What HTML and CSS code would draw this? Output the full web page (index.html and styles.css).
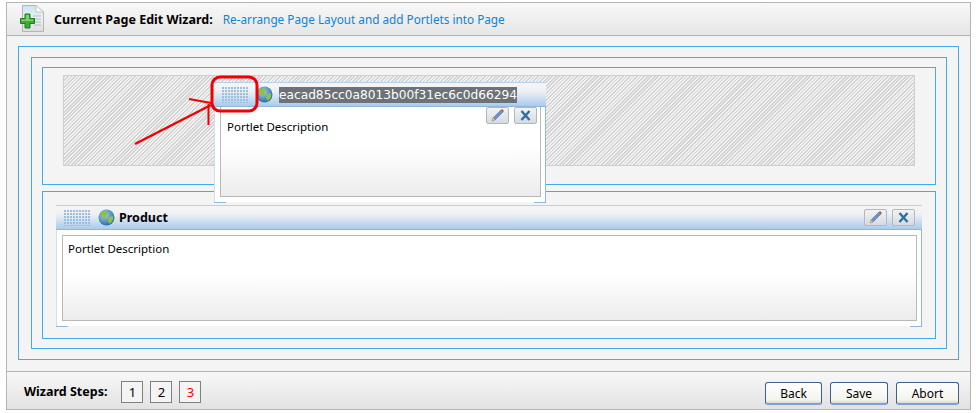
FILE: index.html
```html
<!DOCTYPE html>
<html>
<head>
    <title>Current Page Edit Wizard</title>
    <link rel="stylesheet" href="styles.css">
</head>
<body>
    <div id="wizard">
        <div class="wizard-header">
            <svg class="page-icon" width="26" height="28" viewBox="0 0 26 28">
                <defs>
                    <linearGradient id="sheet" x1="0" y1="0" x2="0" y2="1">
                        <stop offset="0" stop-color="#c9e4f4"/>
                        <stop offset="0.5" stop-color="#eef2f3"/>
                        <stop offset="1" stop-color="#dcdcdc"/>
                    </linearGradient>
                </defs>
                <path d="M2.5 .5H16L23.5 7V26.5H2.5Z" fill="url(#sheet)" stroke="#b5b5b5"/>
                <path d="M16 .5V7H23.5Z" fill="#fff" stroke="#c4c4c4"/>
                <path d="M13 11H21M14 14H21M14 17H21M14 20H21" stroke="#c3ccd0" stroke-width="1.5"/>
                <path d="M5 9H10V13.5H14.5V18.5H10V23H5V18.5H.5V13.5H5Z" fill="#3faa35" stroke="#1f7a22"/>
                <path d="M6 10H9V14.5H6ZM1.5 14.500H13V16H1.500Z" fill="#7fd36f"/>
            </svg>
            <span class="wizard-title">Current Page Edit Wizard:</span>
            <span class="wizard-sub">Re-arrange Page Layout and add Portlets into Page</span>
        </div>

        <div class="wizard-body">
            <div class="frame frame-outer">
                <div class="frame frame-mid">
                    <div class="frame frame-inner frame-top">
                        <div class="drop-zone"></div>
                    </div>
                    <div class="frame frame-inner frame-bottom">
                        <div class="portlet">
                            <div class="portlet-title">
                                <svg class="grip" width="27" height="16"><rect width="27" height="16" fill="url(#dots)"/></svg>
                                <svg class="globe" width="17" height="17" viewBox="0 0 17 17"><use href="#globe-icon"/></svg>
                                <span class="portlet-name">Product</span>
                                <div class="tools">
                                    <span class="tool"><svg width="15" height="13" viewBox="0 0 15 13"><use href="#pencil-icon"/></svg></span>
                                    <span class="tool"><svg width="15" height="13" viewBox="0 0 15 13"><use href="#close-icon"/></svg></span>
                                </div>
                            </div>
                            <div class="portlet-wrap">
                                <div class="portlet-content">Portlet Description</div>
                                <span class="corner corner-left"></span>
                                <span class="corner corner-right"></span>
                            </div>
                        </div>
                    </div>
                </div>
            </div>
        </div>

        <div class="wizard-footer">
            <span class="steps-label">Wizard Steps:</span>
            <span class="step">1</span>
            <span class="step">2</span>
            <span class="step step-current">3</span>
            <div class="buttons">
                <button type="button" class="btn btn-back">Back</button>
                <button type="button" class="btn btn-save">Save</button>
                <button type="button" class="btn btn-abort">Abort</button>
            </div>
        </div>
    </div>

    <!-- portlet being dragged, lies over the drop zone -->
    <div class="portlet portlet-float">
        <div class="portlet-title">
            <svg class="grip" width="27" height="16"><rect width="27" height="16" fill="url(#dots)"/></svg>
            <svg class="globe" width="17" height="17" viewBox="0 0 17 17"><use href="#globe-icon"/></svg>
            <span class="portlet-name selected">eacad85cc0a8013b00f31ec6c0d66294</span>
        </div>
        <div class="tools">
            <span class="tool"><svg width="15" height="13" viewBox="0 0 15 13"><use href="#pencil-icon"/></svg></span>
            <span class="tool"><svg width="15" height="13" viewBox="0 0 15 13"><use href="#close-icon"/></svg></span>
        </div>
        <div class="portlet-wrap">
            <div class="portlet-content">Portlet Description</div>
            <span class="corner corner-left"></span>
            <span class="corner corner-right"></span>
        </div>
    </div>

    <!-- red annotation -->
    <svg class="annotation" width="976" height="413" viewBox="0 0 976 413">
        <rect x="212" y="77" width="45" height="34" rx="8" fill="none" stroke="#f00000" stroke-width="3"/>
        <path d="M135 144L211 105" fill="none" stroke="#f00000" stroke-width="2.500"/>
        <path d="M189 99L211 103M208.500 104V125" fill="none" stroke="#f00000" stroke-width="2"/>
    </svg>

    <!-- shared icon defs -->
    <svg width="0" height="0" class="defs">
        <defs>
            <pattern id="dots" width="3" height="3" patternUnits="userSpaceOnUse">
                <rect width="2" height="2" fill="#9dbedd"/>
            </pattern>
            <radialGradient id="sea" cx="0.4" cy="0.35" r="0.7">
                <stop offset="0" stop-color="#a7d3ea"/>
                <stop offset="1" stop-color="#23689c"/>
            </radialGradient>
            <symbol id="globe-icon" viewBox="0 0 17 17">
                <circle cx="8.500" cy="8.500" r="8" fill="url(#sea)"/>
                <path d="M4 3L8 2 10 4 8 7 9 9 6 10 4 7 2 6ZM11 8L15 7 15 11 12 15 10 12Z" fill="#8fc04a"/>
            </symbol>
            <symbol id="pencil-icon" viewBox="0 0 15 13">
                <path d="M3 9L11 1 13 3 5 11 2 12Z" fill="#6d93d6" stroke="#50699c" stroke-width=".6"/>
                <path d="M11 1L12 0 14 2 13 3Z" fill="#b5533c"/>
                <path d="M3 9L5 11 2 12Z" fill="#f0d050"/>
            </symbol>
            <symbol id="close-icon" viewBox="0 0 15 13">
                <path d="M3.500 2L11.500 11M11.500 2L3.500 11" stroke="#2f6ea3" stroke-width="2.400"/>
            </symbol>
        </defs>
    </svg>
</body>
</html>
```

FILE: styles.css
```css
body {
    margin: 0;
    background-color: #fff;
    font-family: "Noto Sans", Tahoma, sans-serif;
    font-size: 11.5px;
    color: #000;
    height: 413px;
    overflow: hidden;
    position: relative;
}

#wizard {
    margin: 2px 5px 0 6px;
    border: 1px solid #b4b4b4;
    height: 408px;
    box-sizing: border-box;
    display: flex;
    flex-direction: column;
    background-color: #f4f4f4;
}

.wizard-header {
    height: 33px;
    flex: none;
    box-sizing: border-box;
    border-bottom: 1px solid #b4b4b4;
    background: linear-gradient(#f8f8f8, #e6e6e6);
    display: flex;
    align-items: center;
    padding-left: 13px;
}

.page-icon {
    margin-right: 8px;
}

.wizard-title {
    font-weight: bold;
    font-size: 12.500px;
    margin-right: 10px;
}

.wizard-sub {
    color: #0a84e0;
    font-size: 11.750px;
}

.wizard-body {
    padding: 10px 11px 10px;
    flex: 1;
}

.frame {
    border: 1px solid #3fabf0;
    box-sizing: border-box;
}

.frame-outer {
    padding: 10px 11px 10px 12px;
    height: 314px;
}

.frame-mid {
    padding: 9px 10px;
    height: 292px;
}

.frame-top {
    padding: 7px 20px;
    height: 118px;
    margin-bottom: 6px;
}

.frame-bottom {
    padding: 13px 13px;
    height: 148px;
}

.drop-zone {
    height: 91px;
    box-sizing: border-box;
    border: 1px solid #cfcfcf;
    background: repeating-linear-gradient(135deg, #d2d2d2 0, #d2d2d2 1.200px, #f2f2f2 1.200px, #f2f2f2 2.500px);
}

.portlet-title {
    height: 25px;
    box-sizing: border-box;
    border-top: 1px solid #b5d2ea;
    border-bottom: 1px solid #8fb5d8;
    background: linear-gradient(#f5f5f5 0, #eef1f4 35%, #a9cbee 100%);
    display: flex;
    align-items: center;
    padding-left: 8px;
}

.grip {
    margin-right: 7px;
}

.globe {
    margin-right: 4px;
}

.portlet-name {
    font-weight: bold;
    font-size: 12.500px;
}

.selected {
    font-weight: normal;
    font-family: "DejaVu Sans", sans-serif;
    font-size: 12.200px;
    color: #fff;
    background-color: #6d7278;
    line-height: 16px;
    margin-left: 2px;
}

.tools {
    margin-left: auto;
    margin-right: 7px;
    display: flex;
    gap: 5px;
}

.tool {
    width: 23px;
    height: 17px;
    box-sizing: border-box;
    border: 1px solid #b0b8c0;
    border-radius: 2px;
    background: linear-gradient(#f2f2f2, #d6dbe0);
    display: flex;
    align-items: center;
    justify-content: center;
}

.portlet-wrap {
    position: relative;
    padding: 5px 4px 5px 5px;
    border-left: 1px solid #cfe0ee;
    border-right: 1px solid #8fb9dd;
    background-color: #fff;
    height: 96px;
    box-sizing: border-box;
}

.portlet-content {
    height: 100%;
    box-sizing: border-box;
    border: 1px solid #b8b8b8;
    padding: 5px;
    background: linear-gradient(#fff 0, #fff 45%, #ececec 100%);
}

.corner {
    position: absolute;
    bottom: -1px;
    width: 12px;
    height: 1px;
    background-color: #8fb5d8;
}

.corner-left {
    left: -1px;
}

.corner-right {
    right: -1px;
}

.portlet-float {
    position: absolute;
    left: 214px;
    top: 82px;
    width: 332px;
}

.portlet-float .portlet-wrap {
    height: 95px;
    padding-top: 0;
}

.portlet-float .portlet-content {
    border-top: none;
    padding: 12px 6px;
}

.portlet-float .tools {
    position: absolute;
    top: 25px;
    right: 2px;
    z-index: 1;
}

.wizard-footer {
    height: 38px;
    flex: none;
    box-sizing: border-box;
    border-top: 1px solid #b4b4b4;
    background: linear-gradient(#f8f8f8, #e2e2e2);
    display: flex;
    align-items: center;
    padding: 2px 11px 0 17px;
}

.steps-label {
    font-weight: bold;
    font-size: 12.500px;
    margin-right: 14px;
}

.step {
    width: 22px;
    height: 22px;
    box-sizing: border-box;
    border: 1px solid #808080;
    background-color: #f4f4f4;
    margin-right: 7px;
    display: flex;
    align-items: center;
    justify-content: center;
    font-size: 13px;
}

.step-current {
    color: #f00;
}

.buttons {
    margin-left: auto;
    margin-top: 4px;
    display: flex;
    gap: 8px;
}

.btn {
    height: 23px;
    padding: 0;
    font-family: "Noto Sans", Tahoma, sans-serif;
    font-size: 12px;
    color: #000;
    background: linear-gradient(#fff, #f3f3ee 85%, #dcd8ce);
    border: 1px solid #3f5f8f;
    border-bottom: 2px solid #7f9fd8;
    border-radius: 3px;
}

.btn-back {
    width: 57px;
}

.btn-save {
    width: 58px;
}

.btn-abort {
    width: 63px;
}

.annotation {
    position: absolute;
    left: 0;
    top: 0;
    pointer-events: none;
}

.defs {
    position: absolute;
}
```
